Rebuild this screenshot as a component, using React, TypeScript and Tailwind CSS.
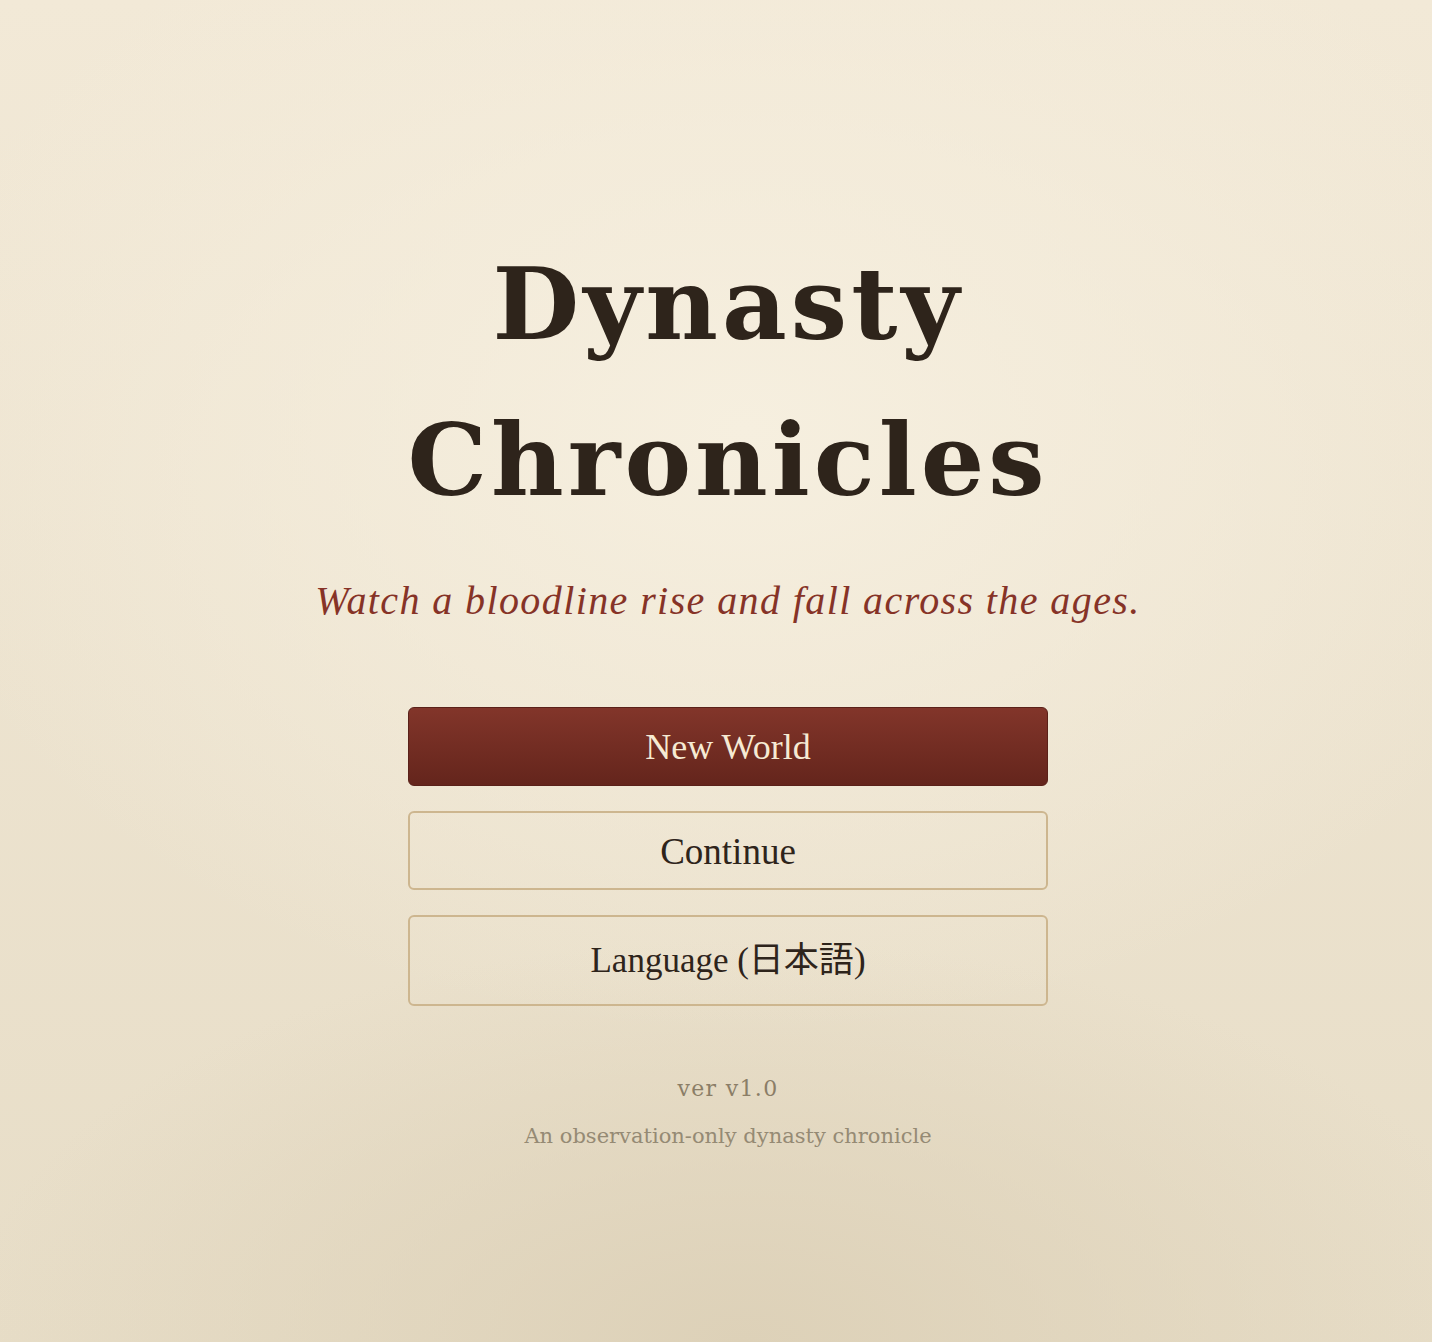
import { useState } from 'react';

const serif = "font-['DejaVu_Serif','Liberation_Serif',serif]";
const times = "font-['Liberation_Serif','Noto_Sans_CJK_JP',serif]";

export default function App() {
  const [lang, setLang] = useState<'ja' | 'en'>('ja');

  return (
    <div className="min-h-screen w-full bg-[radial-gradient(ellipse_60%_45%_at_52%_32%,#f6efdf_0%,rgba(246,239,223,0)_100%),radial-gradient(ellipse_55%_30%_at_52%_100%,#ddd1b8_0%,rgba(221,209,184,0)_100%),linear-gradient(180deg,#f2e9d7_0%,#e7ddc7_100%)] pl-[24px]">
      <div className="mx-auto flex w-[640px] flex-col items-center pt-[226px]">
        <h1
          className={`${serif} whitespace-nowrap text-center text-[100px] font-bold leading-[156px] tracking-[0.04em] text-[#2e241b]`}
        >
          Dynasty
          <br />
          Chronicles
        </h1>

        <p
          className={`${times} mt-[43px] whitespace-nowrap text-[40px] italic leading-none tracking-[0.035em] text-[#863327]`}
        >
          Watch a bloodline rise and fall across the ages.
        </p>

        <div className="mt-[86px] flex w-full flex-col gap-[25px]">
          <button className="h-[79px] w-full rounded-[6px] border border-[#5a2119] bg-[linear-gradient(180deg,#82352a_0%,#64251c_100%)] text-[36px] text-[#f6ead3]">
            <span className={times}>New World</span>
          </button>
          <button className="h-[79px] w-full rounded-[6px] border-2 border-[#cdb68f] bg-transparent text-[37px] text-[#2e241b]">
            <span className={times}>Continue</span>
          </button>
          <button
            onClick={() => setLang(lang === 'ja' ? 'en' : 'ja')}
            className="h-[91px] w-full rounded-[6px] border-2 border-[#cdb68f] bg-transparent text-[35px] text-[#2e241b]"
          >
            <span className={times}>Language ({lang === 'ja' ? '日本語' : 'English'})</span>
          </button>
        </div>

        <div className={`${serif} mt-[66px] text-[22px] tracking-[0.06em] text-[#8b7e67]`}>ver v1.0</div>
        <div className={`${serif} mt-[16px] text-[21px] text-[#958a74]`}>
          An observation-only dynasty chronicle
        </div>
      </div>
    </div>
  );
}
